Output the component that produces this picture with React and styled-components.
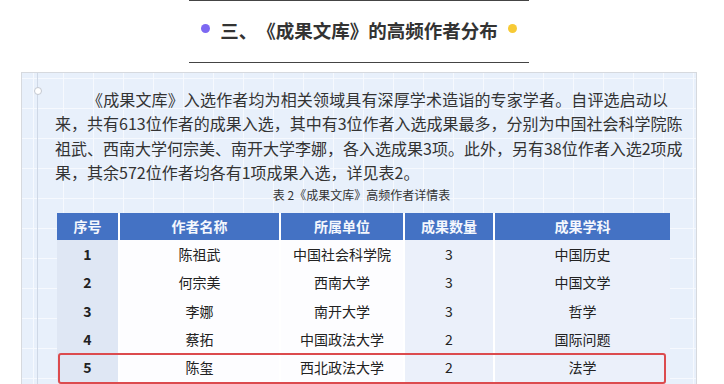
import React from 'react';
import styled, { createGlobalStyle } from 'styled-components';

const GlobalStyle = createGlobalStyle`
  html, body {
    margin: 0;
    padding: 0;
    background: #ffffff;
    font-family: "Noto Sans CJK SC", "Noto Sans", sans-serif;
    color: #333;
    text-spacing-trim: space-all;
  }
`;

const Page = styled.div`
  width: 724px;
  height: 384px;
  overflow: hidden;
  display: flex;
  flex-direction: column;
  align-items: flex-start;
`;

const Header = styled.div`
  width: 340px;
  height: 57px;
  margin-left: 189px;
  border-top: 1.5px solid #444;
  border-bottom: 1.5px solid #444;
  display: flex;
  align-items: center;
  justify-content: center;
  gap: 10px;
  padding-bottom: 4px;
  box-sizing: content-box;
`;

const Dot = styled.span`
  width: 9px;
  height: 9px;
  border-radius: 50%;
  background: ${p => p.color};
  margin-top: -2px;
`;

const Title = styled.h2`
  margin: 0;
  font-size: 18.5px;
  font-weight: 700;
  color: #333;
  text-spacing-trim: space-all;
`;

const Panel = styled.div`
  position: relative;
  margin: 9px 0 0 21px;
  width: 676px;
  flex: 1;
  box-sizing: border-box;
  border: 1px solid #d6d9de;
  border-bottom: none;
  background-color: #e8f0fb;
  background-image:
    linear-gradient(#f6f9fe 1.5px, transparent 1.5px),
    linear-gradient(90deg, #f6f9fe 1.5px, transparent 1.5px);
  background-size: 30px 30px;
  background-position: 11px 5px;
  padding: 14px 28px 0 33px;

  &::before {
    content: '';
    position: absolute;
    left: 15px;
    top: 0;
    bottom: 0;
    width: 1px;
    background: #cfd8e6;
  }
`;

const Pin = styled.span`
  position: absolute;
  left: 12px;
  top: 14px;
  width: 6px;
  height: 6px;
  border-radius: 50%;
  border: 1px solid #c3c8d0;
  background: #fff;
`;

const Paragraph = styled.div`
  font-size: 16px;
  line-height: 24.4px;
  color: #333;
  text-spacing-trim: space-all;
`;

const Line = styled.div`
  text-align: ${p => (p.last ? 'left' : 'justify')};
  text-align-last: ${p => (p.last ? 'left' : 'justify')};
  text-indent: ${p => (p.indent ? '2em' : '0')};
  white-space: nowrap;
`;

const Caption = styled.div`
  text-align: center;
  font-size: 12px;
  line-height: 20px;
  color: #333;
  margin: 0 0 8px 0;
  text-spacing-trim: space-all;
`;

const Table = styled.div`
  position: relative;
  display: flex;
  flex-direction: column;
  width: 613px;
  margin-left: 2px;
  background: #ffffff;
`;

const Row = styled.div`
  position: relative;
  display: grid;
  grid-template-columns: 61px 159px 122px 88px 175px;
  column-gap: 2px;
  height: ${p => (p.head ? '27px' : '28.4px')};

  ${p =>
    p.highlight &&
    `
    &::after {
      content: '';
      position: absolute;
      left: 1px;
      right: 4px;
      top: 0;
      bottom: -2px;
      border: 2.5px solid #dc4b4e;
      border-radius: 3px;
      pointer-events: none;
    }
  `}
`;

const HeadCell = styled.div`
  background: #4472c4;
  color: #f4f7fd;
  font-size: 14px;
  font-weight: 700;
  display: flex;
  align-items: center;
  justify-content: center;
`;

const Cell = styled.div`
  background: ${p => p.bg};
  color: #222;
  font-size: 14px;
  font-weight: ${p => (p.bold ? 700 : 400)};
  display: flex;
  align-items: center;
  justify-content: center;
`;

const columns = ['序号', '作者名称', '所属单位', '成果数量', '成果学科'];
const colBg = ['#dfe7f4', '#fdfdff', '#fdfdff', '#ebf0fa', '#ebf0fa'];

const rows = [
  ['1', '陈祖武', '中国社会科学院', '3', '中国历史'],
  ['2', '何宗美', '西南大学', '3', '中国文学'],
  ['3', '李娜', '南开大学', '3', '哲学'],
  ['4', '蔡拓', '中国政法大学', '2', '国际问题'],
  ['5', '陈玺', '西北政法大学', '2', '法学'],
];

export default function App() {
  return (
    <>
      <GlobalStyle />
      <Page>
        <Header>
          <Dot color="#7c68f2" />
          <Title>三、《成果文库》的高频作者分布</Title>
          <Dot color="#f7ca35" />
        </Header>

        <Panel>
          <Pin />
          <Paragraph>
            <Line indent>《成果文库》入选作者均为相关领域具有深厚学术造诣的专家学者。自评选启动以</Line>
            <Line>来，共有613位作者的成果入选，其中有3位作者入选成果最多，分别为中国社会科学院陈</Line>
            <Line>祖武、西南大学何宗美、南开大学李娜，各入选成果3项。此外，另有38位作者入选2项成</Line>
            <Line last>果，其余572位作者均各有1项成果入选，详见表2。</Line>
          </Paragraph>
          <Caption>表 2《成果文库》高频作者详情表</Caption>

          <Table>
            <Row head>
              {columns.map(c => (
                <HeadCell key={c}>{c}</HeadCell>
              ))}
            </Row>
            {rows.map((r, i) => (
              <Row key={r[0]} highlight={i === rows.length - 1}>
                {r.map((v, j) => (
                  <Cell key={j} bg={colBg[j]} bold={j === 0}>
                    {v}
                  </Cell>
                ))}
              </Row>
            ))}
          </Table>
        </Panel>
      </Page>
    </>
  );
}
